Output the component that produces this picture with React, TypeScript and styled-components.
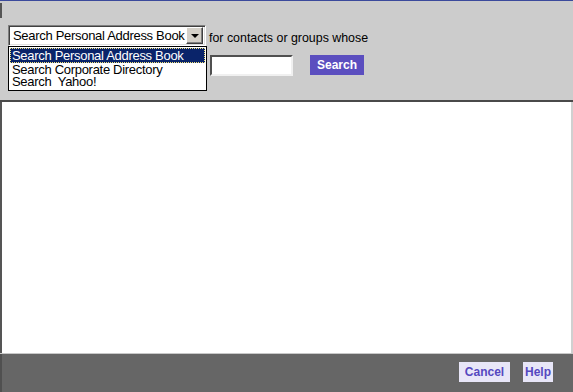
import React from "react";
import styled, { createGlobalStyle } from "styled-components";

const Global = createGlobalStyle`
  html, body { margin: 0; padding: 0; }
  body {
    background: #cccccc;
    font-family: "Liberation Sans", Arial, sans-serif;
    width: 573px;
    height: 392px;
    overflow: hidden;
  }
`;

const Page = styled.div`
  width: 573px;
  height: 392px;
  display: flex;
  flex-direction: column;
  background: #cccccc;
`;

const TopLine = styled.div`
  height: 1px;
  background: #3b4a9c;
  flex: none;
`;

const Header = styled.div`
  position: relative;
  height: 99px;
  flex: none;
  box-sizing: border-box;
  padding: 24px 0 0 8px;
  display: flex;
  flex-direction: column;
  gap: 9px;
`;

const FrameMark = styled.div`
  position: absolute;
  left: 0;
  top: 2px;
  width: 2px;
  height: 15px;
  background: #555555;
`;

const Row = styled.div<{ $indent?: number }>`
  display: flex;
  align-items: center;
  padding-left: ${(p) => p.$indent ?? 0}px;
`;

const SelectWrap = styled.div`
  position: relative;
  width: 198px;
  height: 21px;
  box-sizing: border-box;
  border-top: 1px solid #808080;
  border-left: 1px solid #808080;
  border-right: 1px solid #ffffff;
  border-bottom: 1px solid #ffffff;
  box-shadow: inset 1px 1px 0 #404040, inset -1px -1px 0 #dfdfdf;
  background: #ffffff;
  display: flex;
  align-items: center;
  padding: 0 2px 0 4px;
`;

const SelectText = styled.span`
  flex: 1;
  font-size: 13px;
  letter-spacing: -0.3px;
  color: #000;
  white-space: nowrap;
  overflow: hidden;
`;

const ArrowBtn = styled.div`
  width: 17px;
  height: 17px;
  flex: none;
  box-sizing: border-box;
  background: #d4d0c8;
  border-top: 1px solid #ffffff;
  border-left: 1px solid #ffffff;
  border-right: 1px solid #404040;
  border-bottom: 1px solid #404040;
  box-shadow: inset -1px -1px 0 #808080;
  display: flex;
  align-items: center;
  justify-content: center;
`;

const Arrow = styled.div`
  width: 0;
  height: 0;
  border-left: 4px solid transparent;
  border-right: 4px solid transparent;
  border-top: 4px solid #000;
  margin-top: 1px;
`;

const DropList = styled.div`
  position: absolute;
  left: -1px;
  top: 20px;
  width: 199px;
  box-sizing: border-box;
  background: #ffffff;
  border: 1px solid #000;
  padding: 1px 1px 2px;
  z-index: 2;
`;

const Option = styled.div<{ $active?: boolean }>`
  font-size: 13px;
  letter-spacing: -0.3px;
  line-height: 12px;
  height: ${(p) => (p.$active ? 15 : 12)}px;
  box-sizing: border-box;
  padding: ${(p) => (p.$active ? "1px 1px" : "0 2px")};
  white-space: pre;
  color: ${(p) => (p.$active ? "#ffffff" : "#000000")};
  background: ${(p) => (p.$active ? "#0a246a" : "transparent")};
  border: ${(p) => (p.$active ? "1px dotted #f2e27a" : "none")};
  margin-bottom: ${(p) => (p.$active ? 1 : 0)}px;
`;

const Label = styled.span`
  font-size: 12.4px;
  color: #000;
  margin-left: 3px;
  margin-top: 4px;
`;

const TextInput = styled.input`
  width: 83px;
  height: 21px;
  box-sizing: border-box;
  border-top: 2px solid #505050;
  border-left: 2px solid #505050;
  border-right: 2px solid #f0f0f0;
  border-bottom: 2px solid #f0f0f0;
  background: #ffffff;
  padding: 0 2px;
  margin: 0;
  outline: none;
  font-size: 12px;
`;

const PurpleButton = styled.button`
  margin-left: 17px;
  width: 54px;
  height: 20px;
  border: none;
  padding: 0;
  background: #5b4ebf;
  color: #ffffff;
  font-family: "Liberation Sans", Arial, sans-serif;
  font-weight: bold;
  font-size: 12px;
  margin-top: -1px;
`;

const Divider = styled.div`
  height: 2px;
  background: #4a4a4a;
  flex: none;
`;

const Content = styled.div`
  height: 251px;
  flex: none;
  box-sizing: border-box;
  background: #ffffff;
  border-left: 2px solid #555555;
  border-right: 2px solid #d0d0d0;
`;

const FooterLine = styled.div`
  height: 1px;
  background: #c8c8c8;
  flex: none;
  margin-left: 2px;
`;

const Footer = styled.div`
  flex: 1;
  background: #666666;
  border-left: 2px solid #505050;
  display: flex;
  justify-content: flex-end;
  align-items: flex-start;
  padding: 8px 20px 0 0;
  gap: 13px;
`;

const LightButton = styled.button<{ $w: number }>`
  width: ${(p) => p.$w}px;
  height: 20px;
  border: none;
  padding: 0;
  background: #e8e6f8;
  color: #5548c0;
  font-family: "Liberation Sans", Arial, sans-serif;
  font-weight: bold;
  font-size: 12px;
`;

export default function App() {
  return (
    <>
      <Global />
      <Page>
        <TopLine />
        <Header>
          <FrameMark />
          <Row>
            <SelectWrap>
              <SelectText>Search Personal Address Book</SelectText>
              <ArrowBtn>
                <Arrow />
              </ArrowBtn>
              <DropList>
                <Option $active>Search Personal Address Book</Option>
                <Option>Search Corporate Directory</Option>
                <Option>{"Search  Yahoo!"}</Option>
              </DropList>
            </SelectWrap>
            <Label>for contacts or groups whose</Label>
          </Row>
          <Row $indent={202}>
            <TextInput />
            <PurpleButton>Search</PurpleButton>
          </Row>
        </Header>
        <Divider />
        <Content />
        <FooterLine />
        <Footer>
          <LightButton $w={51}>Cancel</LightButton>
          <LightButton $w={30}>Help</LightButton>
        </Footer>
      </Page>
    </>
  );
}
